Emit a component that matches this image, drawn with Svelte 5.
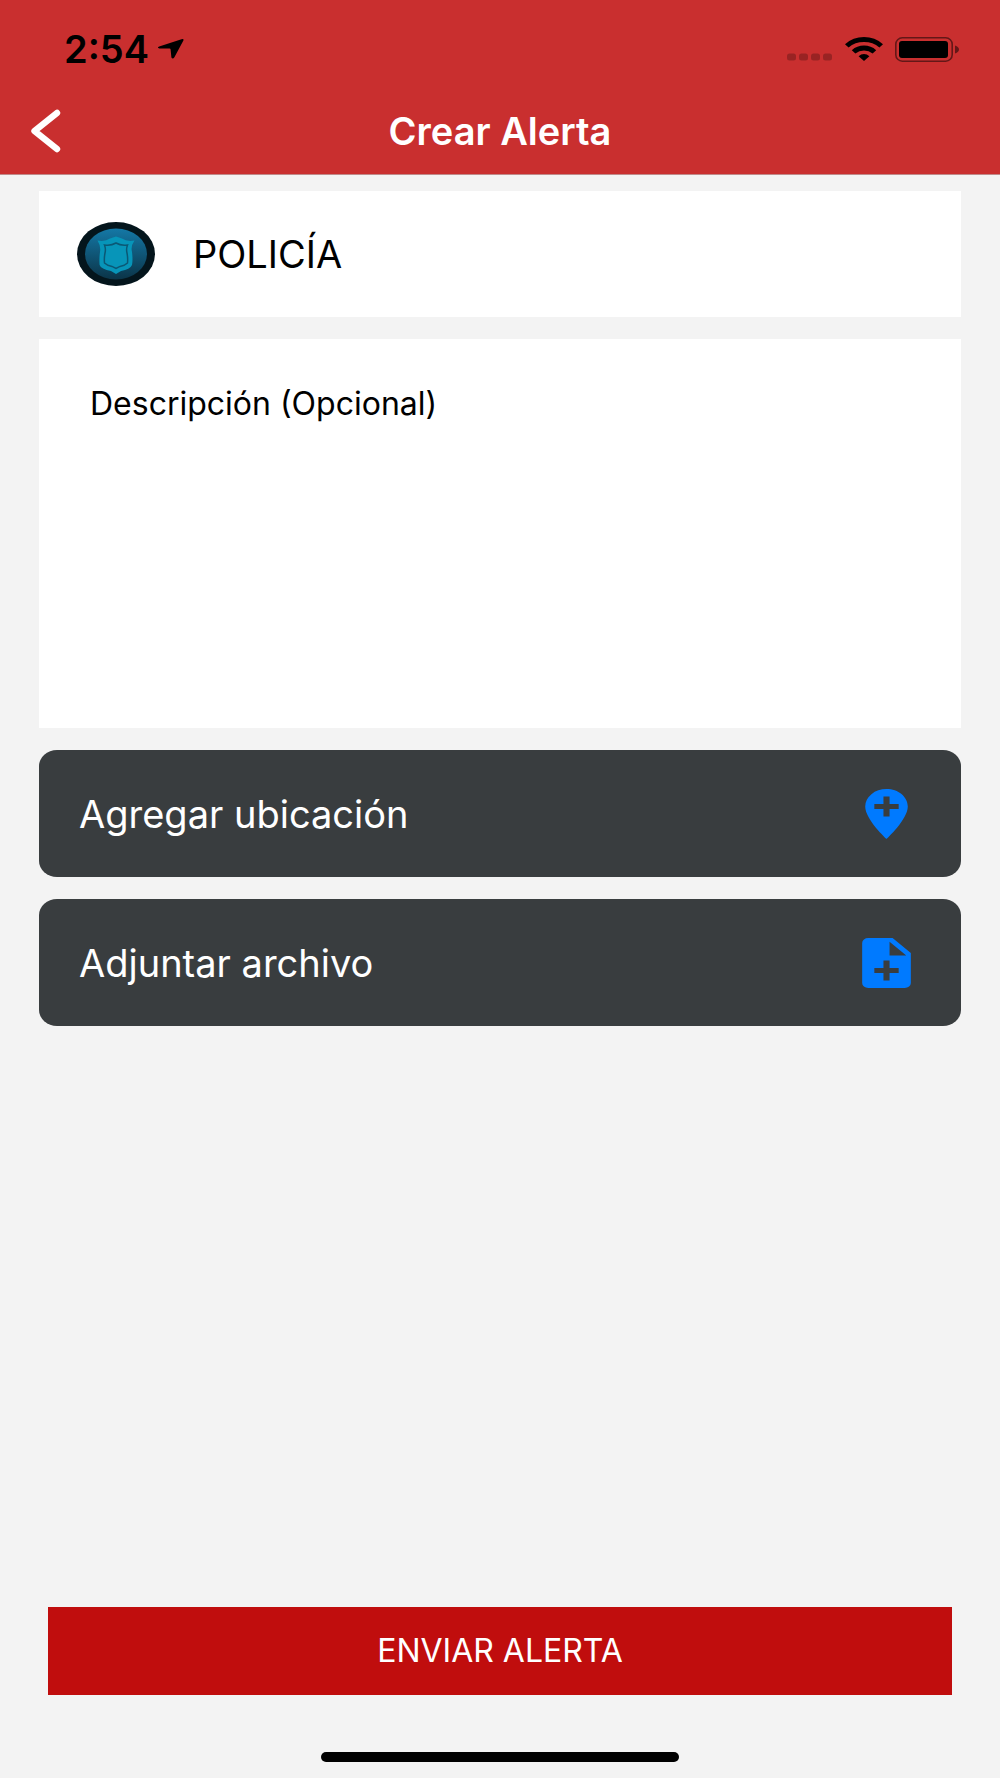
<script>
    let description = '';

    const actions = [
        {
            label: 'Agregar ubicación',
            icon: 'M12 2C15.86 2 19 5.13 19 9C19 14.25 12 22 12 22C12 22 5 14.25 5 9A7 7 0 0 1 12 2M11 5V8H8V10H11V13H13V10H16V8H13V5H11Z'
        },
        {
            label: 'Adjuntar archivo',
            icon: 'M13 9H18.5L13 3.5V9M6 2H14L20 8V20A2 2 0 0 1 18 22H6A2 2 0 0 1 4 20V4A2 2 0 0 1 6 2M11 11V14H8V16H11V19H13V16H16V14H13V11H11Z'
        }
    ];
</script>

<div class="screen">
    <header class="header">
        <div class="status-bar">
            <div class="status-left">
                <span class="time">2:54</span>
                <svg width="28" height="24" viewBox="0 0 28 24">
                    <path d="M2.2 9.4L24.5 2.2Q27.6 1.4 26 4.2L17.4 20.2Q15.8 22.8 14.4 20.6L13.6 12.4Q13.5 11.6 12.6 11.6L2.4 11.4Q-0.4 10.6 2.2 9.4Z" />
                </svg>
            </div>
            <div class="status-right">
                <svg width="46" height="24" viewBox="0 0 46 24" opacity="0.23">
                    {#each [0, 12, 24, 36] as x}
                        <rect {x} y="16.5" width="9" height="7" rx="2.5" />
                    {/each}
                </svg>
                <svg width="38" height="24" viewBox="0 0 38 24">
                    <path d="M0 7.2Q8 0 19 0T38 7.2L34.4 10.4Q28 5 19 5T3.6 10.4Z" />
                    <path d="M6.8 13.2Q12 8.6 19 8.6T31.2 13.2L27.6 16.4Q24 13.6 19 13.6T10.4 16.4Z" />
                    <path d="M13.6 19.2Q16 17 19 17T24.4 19.2L19 24Z" />
                </svg>
                <svg width="64" height="25" viewBox="0 0 64 25">
                    <rect x="0.8" y="0.8" width="56.4" height="23.4" rx="6.5" fill="none" stroke="#000" stroke-width="1.6" opacity="0.5" />
                    <rect x="4" y="4" width="49" height="17" rx="3" />
                    <path d="M60 8.5Q64 10 64 12.5T60 16.5Z" opacity="0.5" />
                </svg>
            </div>
        </div>
        <nav class="nav-bar">
            <button class="back" aria-label="Volver">
                <svg width="32" height="44" viewBox="0 0 32 44">
                    <path d="M27 4L4.5 22L27 40" fill="none" stroke="#fff" stroke-width="6.4" stroke-linecap="round" stroke-linejoin="round" />
                </svg>
            </button>
            <h1>Crear Alerta</h1>
        </nav>
    </header>

    <main class="content">
        <div class="card type">
            <svg width="78" height="64" viewBox="0 0 78 64">
                <defs>
                    <linearGradient id="badge" x1="0" y1="0" x2="0" y2="1">
                        <stop offset="0" stop-color="#1478a6" />
                        <stop offset="1" stop-color="#0b3448" />
                    </linearGradient>
                </defs>
                <ellipse cx="39" cy="32" rx="39" ry="32" fill="#04151c" />
                <ellipse cx="39" cy="32" rx="31" ry="25.5" fill="url(#badge)" />
                <path d="M20.5 18.5Q28 20 33 16.5L39 14.5L45 16.5Q50 20 57.5 18.5Q53.5 24 55 30Q56 38 55 43Q53 47.5 44 49L39 52L34 49Q24 47 22.6 43Q22 37 23 30Q24 24 20.5 18.5Z" fill="#0795b9" />
                <path d="M27.5 23Q34 24 39 21Q44 24 50.5 23Q49 27 50 31Q51 36 50.5 41Q48 43.5 43 44.4L39 46.5L35 44.4Q30 43.5 27.5 41Q27 36 28 31Q29 27 27.5 23Z" fill="#0795b9" stroke="#0b5875" stroke-width="1.5" />
            </svg>
            <span>POLICÍA</span>
        </div>

        <textarea
            class="card description"
            aria-label="Descripción (Opcional)"
            placeholder="Descripción (Opcional)"
            bind:value={description}
        ></textarea>

        {#each actions as action}
            <button class="action">
                <span>{action.label}</span>
                <svg width="73" height="60" viewBox="0 0 24 24" preserveAspectRatio="none">
                    <path d={action.icon} fill="#007aff" fill-rule="evenodd" />
                </svg>
            </button>
        {/each}
    </main>

    <footer class="footer">
        <button class="submit">ENVIAR ALERTA</button>
        <div class="home-indicator"></div>
    </footer>
</div>

<style>
    :global(body) {
        margin: 0;
        background: #f3f3f3;
    }

    .screen {
        display: flex;
        flex-direction: column;
        min-height: 100vh;
        font-family: Inter, "Liberation Sans", sans-serif;
        color: #000;
    }

    button,
    textarea {
        margin: 0;
        border: none;
        font-family: inherit;
    }

    button {
        cursor: pointer;
    }

    svg {
        display: block;
        flex-shrink: 0;
    }

    .header {
        background: #c92f2f;
        border-bottom: 1px solid #c08a8a;
    }

    .status-bar {
        display: flex;
        align-items: center;
        justify-content: space-between;
        box-sizing: border-box;
        height: 88px;
        padding: 10px 41px 0 64px;
    }

    .status-left {
        display: flex;
        align-items: center;
        gap: 8px;
    }

    .status-right {
        display: flex;
        align-items: center;
        gap: 12px;
    }

    .time {
        font-size: 38px;
        line-height: 40px;
        font-weight: 600;
    }

    .nav-bar {
        display: grid;
        grid-template-columns: 62px 1fr 62px;
        align-items: center;
        height: 86px;
    }

    .back {
        justify-self: end;
        padding: 0;
        background: none;
    }

    h1 {
        margin: 0;
        color: #fff;
        font-size: 38px;
        line-height: 40px;
        font-weight: 600;
        text-align: center;
    }

    .content {
        display: flex;
        flex-direction: column;
        gap: 22px;
        padding: 16px 39px;
    }

    .card {
        box-sizing: border-box;
        background: #fff;
    }

    .type {
        display: flex;
        align-items: center;
        gap: 38px;
        height: 126px;
        padding: 0 38px;
        font-size: 38px;
        line-height: 40px;
    }

    .description {
        display: block;
        width: 100%;
        height: 389px;
        padding: 45px 51px;
        border-radius: 0;
        outline: none;
        resize: none;
        color: #000;
        font-size: 32px;
        line-height: 40px;
    }

    .description::placeholder {
        color: #000;
        opacity: 1;
    }

    .action {
        display: flex;
        align-items: center;
        justify-content: space-between;
        height: 127px;
        padding: 0 38px 0 40px;
        border-radius: 18px / 16px;
        background: #393d3f;
        color: #fff;
        font-size: 38px;
        line-height: 40px;
        text-align: left;
    }

    .footer {
        display: flex;
        flex-direction: column;
        gap: 57px;
        margin-top: auto;
        padding: 0 48px 16px;
    }

    .submit {
        height: 88px;
        background: #c00d0d;
        color: #fff;
        font-size: 32px;
        line-height: 40px;
    }

    .home-indicator {
        align-self: center;
        width: 358px;
        height: 10px;
        border-radius: 5px;
        background: #000;
    }
</style>
